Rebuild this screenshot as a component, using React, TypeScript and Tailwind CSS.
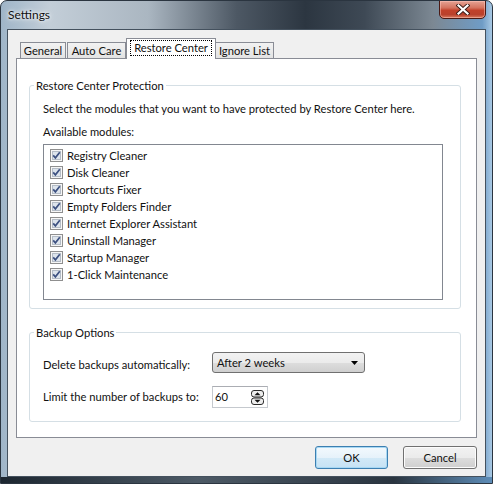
import React from "react";

const modules = [
  "Registry Cleaner",
  "Disk Cleaner",
  "Shortcuts Fixer",
  "Empty Folders Finder",
  "Internet Explorer Assistant",
  "Uninstall Manager",
  "Startup Manager",
  "1-Click Maintenance",
];

function CheckBox() {
  return (
    <svg width="13" height="13" viewBox="0 0 13 13" className="shrink-0">
      <rect x="0.5" y="0.5" width="12" height="12" fill="#f6f6f6" stroke="#8f8f8f" />
      <rect x="2.5" y="2.5" width="8" height="8" fill="#dde4ec" stroke="#b4bcc6" />
      <path d="M3.2 6.4 L5.4 8.9 L9.8 3.3" stroke="#3d5181" strokeWidth="1.7" fill="none" />
    </svg>
  );
}

function Spin() {
  return (
    <svg width="13" height="15" viewBox="0 0 13 15" className="shrink-0">
      <rect x="0.5" y="0.5" width="12" height="6.5" rx="2.5" fill="#ededed" stroke="#2a2a2a" />
      <rect x="0.5" y="8" width="12" height="6.5" rx="2.5" fill="#ededed" stroke="#2a2a2a" />
      <path d="M3.5 5.2 L6.5 2.2 L9.5 5.2 Z" fill="#111" />
      <path d="M3.5 9.8 L6.5 12.8 L9.5 9.8 Z" fill="#111" />
    </svg>
  );
}

export default function App() {
  return (
    <div
      className="w-[493px] h-[484px] flex flex-col border border-[#2b3540] rounded-t-[7px] overflow-hidden bg-[linear-gradient(90deg,#9fb5c8_0%,#c3ced8_10%,#aab6c1_30%,#4d5864_48%,#2c3641_62%,#3e4955_74%,#7c8893_88%,#6f9cc6_98%,#a9c9e4_100%)] text-[11.2px] text-[#111]"
      style={{ fontFamily: "Lato, 'Noto Sans', sans-serif" }}
    >
      {/* Title bar */}
      <div className="h-[28px] flex items-start justify-between shrink-0">
        <div className="pl-[7px] pt-[6px] leading-[16px] text-[12px] [text-shadow:0_0_6px_#ffffff,0_0_3px_#ffffff]">
          Settings
        </div>
        <div className="mr-[6px] -mt-[1px] w-[47px] h-[19px] rounded-b-[5px] border border-[#4b1a14] bg-[linear-gradient(#e6a394_0%,#d4735f_40%,#c2412a_55%,#b9412c_80%,#d87b5f_100%)] flex items-center justify-center shadow-[inset_0_0_0_1px_rgba(255,200,190,0.5)]">
          <svg width="14" height="11" viewBox="0 0 14 11">
            <path d="M2.5 1.5 L11.5 9.5 M11.5 1.5 L2.5 9.5" stroke="#3a1d18" strokeWidth="4" strokeLinecap="square" />
            <path d="M2.5 1.5 L11.5 9.5 M11.5 1.5 L2.5 9.5" stroke="#ffffff" strokeWidth="2.2" strokeLinecap="square" />
          </svg>
        </div>
      </div>

      {/* Client area */}
      <div className="ml-[6px] w-[479px] h-[448px] shrink-0 border border-[#44515e] bg-[#f0f0f0] flex flex-col">
        {/* Tabs */}
        <div className="mt-[8px] ml-[8px] h-[20px] flex items-end">
          <div className="ml-[4px] w-[46px] h-[16px] border border-b-0 border-[#898c95] bg-[linear-gradient(#f2f2f2,#e3e3e3)] flex items-center justify-center leading-[14px]">
            General
          </div>
          <div className="ml-[1px] w-[59px] h-[16px] border border-b-0 border-[#898c95] bg-[linear-gradient(#f2f2f2,#e3e3e3)] flex items-center justify-center leading-[14px]">
            Auto Care
          </div>
          <div className="relative z-10 -mb-[1px] w-[90px] h-[21px] border border-b-0 border-[#898c95] bg-white flex items-start justify-center pt-[2px]">
            <span className="px-[3px] leading-[14px] outline outline-1 outline-dotted outline-black">
              Restore Center
            </span>
          </div>
          <div className="w-[58px] h-[16px] border border-b-0 border-l-0 border-[#898c95] bg-[linear-gradient(#f2f2f2,#e3e3e3)] flex items-center justify-center leading-[14px]">
            Ignore List
          </div>
        </div>

        {/* Panel */}
        <div className="ml-[8px] w-[461px] h-[380px] border border-[#898c95] bg-white flex flex-col">
          {/* Group 1 */}
          <div className="mt-[26px] ml-[12px] w-[432px] border border-[#d5dfe5] rounded-[3px] flex flex-col pl-[13px] pb-[8px]">
            <div className="-mt-[8px] -ml-[9px] w-fit bg-white px-[2px] leading-[16px]">
              Restore Center Protection
            </div>
            <div className="mt-[7px] leading-[16px]">
              Select the modules that you want to have protected by Restore Center here.
            </div>
            <div className="mt-[7px] leading-[16px]">Available modules:</div>
            <div className="mt-[4px] w-[400px] h-[156px] border border-[#828790] bg-white pt-[2px] pl-[6px] flex flex-col">
              {modules.map((m) => (
                <div key={m} className="h-[17px] flex items-center gap-[4px] leading-[16px]">
                  <CheckBox />
                  <span>{m}</span>
                </div>
              ))}
            </div>
          </div>

          {/* Group 2 */}
          <div className="mt-[23px] ml-[12px] w-[432px] border border-[#d5dfe5] rounded-[3px] flex flex-col pl-[13px] pb-[13px]">
            <div className="-mt-[8px] -ml-[9px] w-fit bg-white px-[2px] leading-[16px]">
              Backup Options
            </div>
            <div className="mt-[11px] flex items-center h-[21px]">
              <div className="w-[169px] leading-[16px] pt-[4px]">Delete backups automatically:</div>
              <div className="w-[153px] h-[21px] rounded-[3px] border border-[#707070] bg-[linear-gradient(#f2f2f2_0%,#ebebeb_50%,#dddddd_51%,#cfcfcf_100%)] flex items-center justify-between pl-[4px] pr-[6px]">
                <span className="leading-[16px]">After 2 weeks</span>
                <svg width="7" height="4" viewBox="0 0 7 4">
                  <path d="M0 0 L7 0 L3.5 4 Z" fill="#000" />
                </svg>
              </div>
            </div>
            <div className="mt-[13px] flex items-center h-[22px]">
              <div className="w-[169px] leading-[16px]">Limit the number of backups to:</div>
              <div className="w-[56px] h-[22px] border border-[#c5c9ce] border-t-[#abadb3] bg-white flex items-center justify-between pl-[2px] pr-[3px]">
                <span className="leading-[16px]">60</span>
                <Spin />
              </div>
            </div>
          </div>
        </div>

        {/* Buttons */}
        <div className="mt-[8px] mr-[8px] flex justify-end gap-[15px]">
          <div className="w-[73px] h-[23px] rounded-[3px] border border-[#3c7fb1] bg-[linear-gradient(#f3f9fd_0%,#e6f2fa_50%,#d2e9f7_51%,#c6e2f4_100%)] shadow-[inset_0_0_0_1px_#a8d8f3] flex items-center justify-center leading-[16px]">
            OK
          </div>
          <div className="w-[74px] h-[23px] rounded-[3px] border border-[#707070] bg-[linear-gradient(#f2f2f2_0%,#ebebeb_50%,#dddddd_51%,#cfcfcf_100%)] shadow-[inset_0_0_0_1px_#fcfcfc] flex items-center justify-center leading-[16px]">
            Cancel
          </div>
        </div>
      </div>
      <div className="flex-1 bg-[linear-gradient(90deg,#1c2630,#4d5a66_40%,#2a3540_80%,#5e8db8)]" />
    </div>
  );
}
